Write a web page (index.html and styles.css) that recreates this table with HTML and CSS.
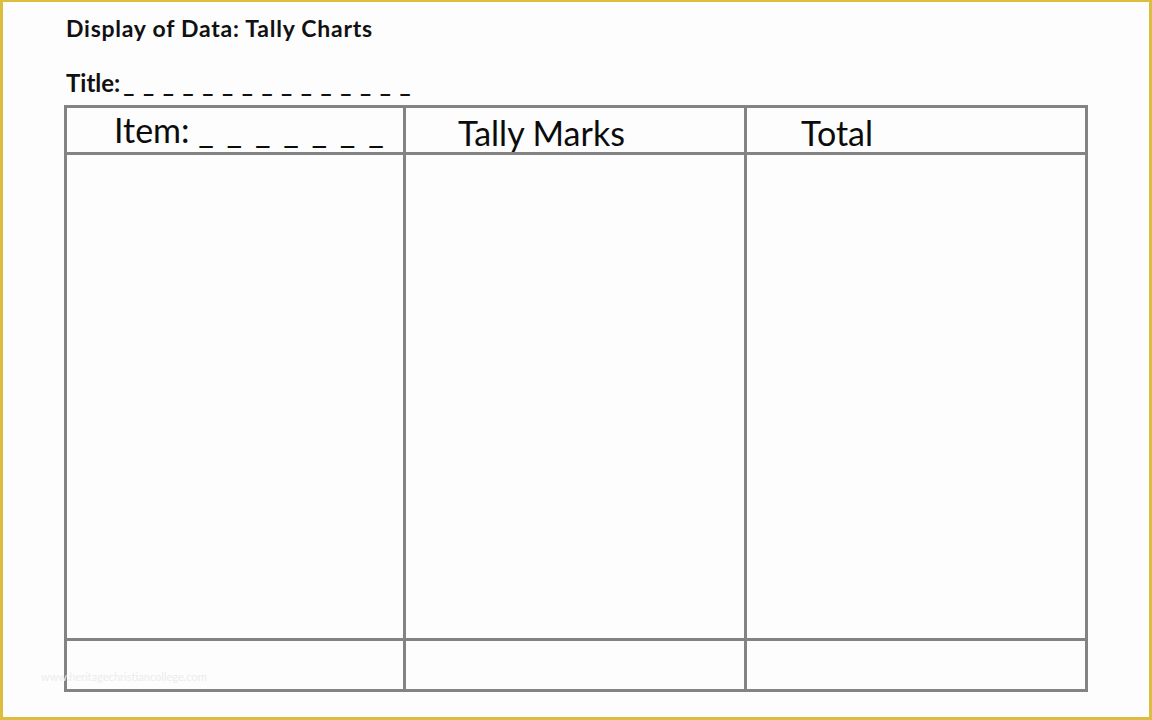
FILE: index.html
```html
<!DOCTYPE html>
<html>
  <head>
    <title>Display of Data: Tally Charts</title>
    <link rel="stylesheet" href="styles.css">
  </head>
  <body>
    <div class="frame">
      <h1 class="heading">Display of Data: Tally Charts</h1>
      <div class="title-line">Title:<span class="blanks">_ _ _ _ _ _ _ _ _ _ _ _ _ _ _</span></div>
      <div class="chart">
        <div class="cell head item">Item: <span class="blanks">_ _ _ _ _ _ _</span></div>
        <div class="cell head tally">Tally Marks</div>
        <div class="cell head total">Total</div>
        <div class="cell body"></div>
        <div class="cell body"></div>
        <div class="cell body"></div>
        <div class="cell foot"></div>
        <div class="cell foot"></div>
        <div class="cell foot"></div>
      </div>
      <div class="mark">www.heritagechristiancollege.com</div>
    </div>
  </body>
</html>
```

FILE: styles.css
```css
* { padding: 0; margin: 0; box-sizing: border-box; }
body { background: #fdfdfd; font-family: Lato, "Open Sans", sans-serif; color: #111; }

.frame {
  position: relative;
  width: 1152px;
  height: 720px;
  border: 3px solid #dcbd3e;
  border-top-width: 2px;
  padding: 11px 0 0 61px;
  background: #fdfdfd;
}

.heading {
  font-size: 23px;
  font-weight: bold;
  line-height: 30px;
  letter-spacing: 0.75px;
  padding-left: 2px;
}

.title-line {
  font-size: 24px;
  font-weight: bold;
  line-height: 30px;
  margin-top: 25px;
  padding-left: 2px;
}

.title-line .blanks {
  letter-spacing: 1.35px;
  margin-left: 3px;
}

.chart {
  display: grid;
  grid-template-columns: 339px 341px 341px;
  grid-template-rows: 47px 486px 51px;
  width: 1024px;
  margin-top: 7px;
  border-top: 3px solid #838383;
  border-left: 3px solid #838383;
}

.cell {
  border-right: 3px solid #838383;
  border-bottom: 3px solid #838383;
}

.head {
  font-size: 34px;
  line-height: 40px;
  color: #0c0c0c;
  padding-top: 5px;
}

.head .blanks { letter-spacing: 2px; }

.item { padding-left: 47px; padding-top: 2px; }
.tally { padding-left: 52px; }
.total { padding-left: 54px; }

.mark {
  position: absolute;
  left: 38px;
  top: 668px;
  font-size: 11px;
  color: #ececec;
}
```
